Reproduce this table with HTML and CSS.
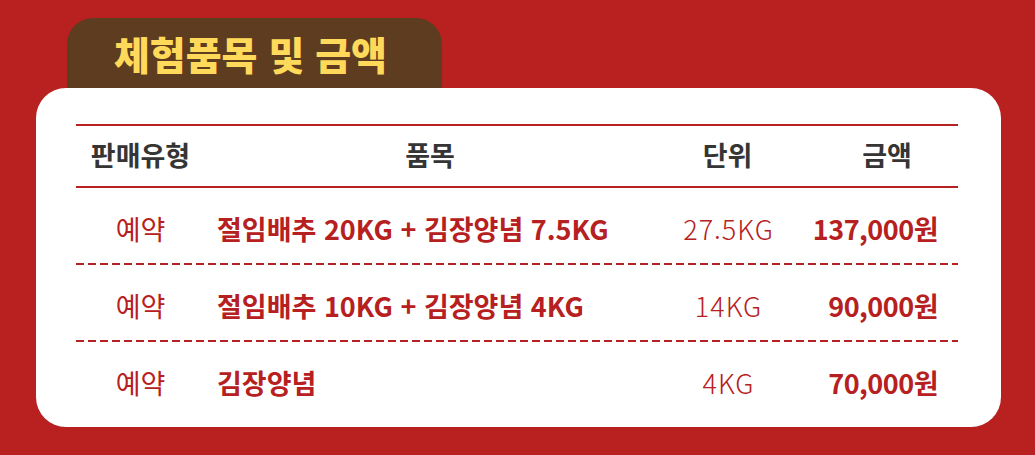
FILE: index.html
```html
<!DOCTYPE html>
<html lang="ko">
<head>
<meta charset="utf-8">
<link rel="stylesheet" href="styles.css">
</head>
<body>
<div class="page">
  <div class="tab"><h1 class="title">체험품목 및 금액</h1></div>
  <div class="card">
    <div class="table">
      <div class="row head">
        <div class="c1">판매유형</div>
        <div class="c2">품목</div>
        <div class="c3">단위</div>
        <div class="c4">금액</div>
      </div>
      <div class="row body">
        <div class="c1">예약</div>
        <div class="c2">절임배추 20KG + 김장양념 7.5KG</div>
        <div class="c3">27.5KG</div>
        <div class="c4">137,000원</div>
      </div>
      <div class="row body">
        <div class="c1">예약</div>
        <div class="c2">절임배추 10KG + 김장양념 4KG</div>
        <div class="c3">14KG</div>
        <div class="c4">90,000원</div>
      </div>
      <div class="row body last">
        <div class="c1">예약</div>
        <div class="c2">김장양념</div>
        <div class="c3">4KG</div>
        <div class="c4">70,000원</div>
      </div>
    </div>
  </div>
</div>
</body>
</html>
```
FILE: styles.css
```css
html, body {
  margin: 0;
  padding: 0;
  background: #b92020;
}
body {
  font-family: "Noto Sans CJK KR", "Noto Sans", sans-serif;
  width: 1035px;
  height: 455px;
  overflow: hidden;
}
.page {
  padding: 18px 0 0 36px;
}
.tab {
  margin-left: 31px;
  width: 375px;
  height: 70px;
  background: #5e3c20;
  border-radius: 26px 26px 0 0;
  display: flex;
  align-items: center;
  justify-content: center;
  box-sizing: border-box;
  padding: 0 8px 0 0;
}
.title {
  margin: 0;
  color: #ffd95a;
  font-size: 39px;
  font-weight: 900;
  line-height: 1;
}
.card {
  width: 965px;
  height: 339px;
  background: #fff;
  border-radius: 30px;
  box-sizing: border-box;
  padding: 36px 0 0 40px;
}
.table {
  width: 882px;
}
.row {
  display: grid;
  grid-template-columns: 129px 450px 145px 158px;
  align-items: center;
  line-height: 1.2;
}
.head {
  height: 64px;
  border-top: 2px solid #b92020;
  border-bottom: 2px solid #b92020;
  box-sizing: border-box;
  color: #353535;
  font-weight: 700;
  font-size: 27px;
  padding-bottom: 2px;
}
.head .c1, .head .c2, .head .c3 { text-align: center; }
.head .c4 { text-align: center; padding-left: 16px; }
.body {
  height: 77px;
  color: #b72020;
  font-size: 27px;
  background-image: repeating-linear-gradient(to right, #b72020 0 8px, transparent 8px 12px);
  background-size: 100% 2px;
  background-repeat: no-repeat;
  background-position: left bottom;
  padding-top: 5px;
  box-sizing: border-box;
}
.body.last { background-image: none; }
.body .c1 { text-align: center; font-weight: 400; }
.body .c2 { padding-left: 12px; font-weight: 700; }
.body .c3 { text-align: center; font-weight: 300; letter-spacing: 1px; padding-left: 2px; }
.body .c4 { text-align: right; padding-right: 20px; font-weight: 700; letter-spacing: -0.5px; }
```
